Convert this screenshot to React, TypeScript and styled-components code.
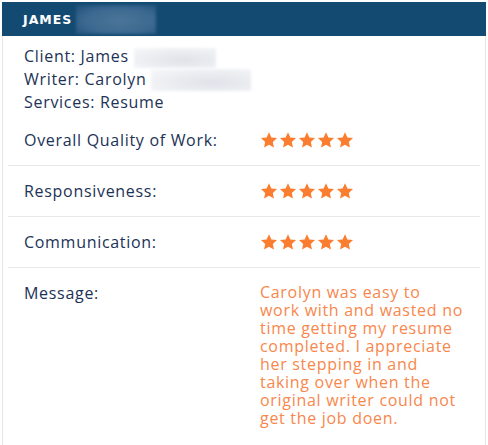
import styled, { createGlobalStyle } from 'styled-components';

const GlobalStyle = createGlobalStyle`
  body {
    margin: 0;
    background: #fff;
    font-family: 'Open Sans', 'Liberation Sans', sans-serif;
  }
`;

const ratings = [
  { label: 'Overall Quality of Work:', stars: 5 },
  { label: 'Responsiveness:', stars: 5 },
  { label: 'Communication:', stars: 5 },
];

function Star() {
  return (
    <svg width='18' height='18' viewBox='0 0 24 24'>
      <path
        fill='#fb7d2f'
        d='M12 1.6l3.2 6.9 7.5.9-5.6 5.1 1.5 7.4L12 18.2l-6.6 3.7 1.5-7.4-5.6-5.1 7.5-.9z'
      />
    </svg>
  );
}

function App() {
  return (
    <>
      <GlobalStyle />
      <Card>
        <Header>
          JAMES <Blur $w={80} $h={29} $dark />
        </Header>
        <Info>
          <div>
            Client: James <Blur $w={82} $h={20} />
          </div>
          <div>
            Writer: Carolyn <Blur $w={100} $h={22} />
          </div>
          <div>Services: Resume</div>
        </Info>
        {ratings.map((r) => (
          <Row key={r.label}>
            <Label>{r.label}</Label>
            <Stars>
              {Array.from({ length: r.stars }).map((_, i) => (
                <Star key={i} />
              ))}
            </Stars>
          </Row>
        ))}
        <Row $last>
          <Label>Message:</Label>
          <Message>
            Carolyn was easy to work with and wasted no time getting my resume
            completed. I appreciate her stepping in and taking over when the
            original writer could not get the job doen.
          </Message>
        </Row>
      </Card>
    </>
  );
}

export default App;

const Card = styled.div`
  margin: 2px 2px 0 2px;
  width: 484px;
  height: 443px;
  box-sizing: border-box;
  border-left: 1px solid #e6e6e6;
  border-right: 1px solid #e6e6e6;
  color: #1c3256;
  font-size: 16px;
  letter-spacing: 0.7px;
`;

const Header = styled.div`
  display: flex;
  align-items: center;
  gap: 4px;
  height: 34px;
  margin: 0 -1px;
  padding: 0 21px;
  background-color: #134a72;
  color: #fff;
  font-family: 'DejaVu Sans', 'Liberation Sans', sans-serif;
  font-weight: 900;
  font-size: 12.5px;
  letter-spacing: 1px;
`;

const Blur = styled.span<{ $w: number; $h: number; $dark?: boolean }>`
  display: inline-block;
  width: ${(p) => p.$w}px;
  height: ${(p) => p.$h}px;
  vertical-align: middle;
  background: ${(p) =>
    p.$dark
      ? 'radial-gradient(ellipse at 55% 55%, #4b7598 0%, #3c6990 55%, #1e5079 100%)'
      : 'radial-gradient(ellipse at 60% 60%, #dfe2e8 0%, #eceef2 55%, #f7f8fa 100%)'};
  filter: blur(1.5px);
`;

const Info = styled.div`
  padding: 9px 21px 1.5px;
  line-height: 22.5px;
`;

const Row = styled.div<{ $last?: boolean }>`
  display: grid;
  grid-template-columns: 236px 1fr;
  align-items: ${(p) => (p.$last ? 'start' : 'center')};
  margin: 0 5px;
  padding: ${(p) => (p.$last ? '15px 16px 0' : '0 16px')};
  height: ${(p) => (p.$last ? 'auto' : '50px')};
  border-bottom: ${(p) => (p.$last ? 'none' : '1px solid #e8e8e8')};
`;

const Label = styled.div`
  line-height: 20px;
`;

const Stars = styled.div`
  display: flex;
  gap: 1px;
`;

const Message = styled.div`
  max-width: 212px;
  color: #f8874c;
  line-height: 18px;
`;
